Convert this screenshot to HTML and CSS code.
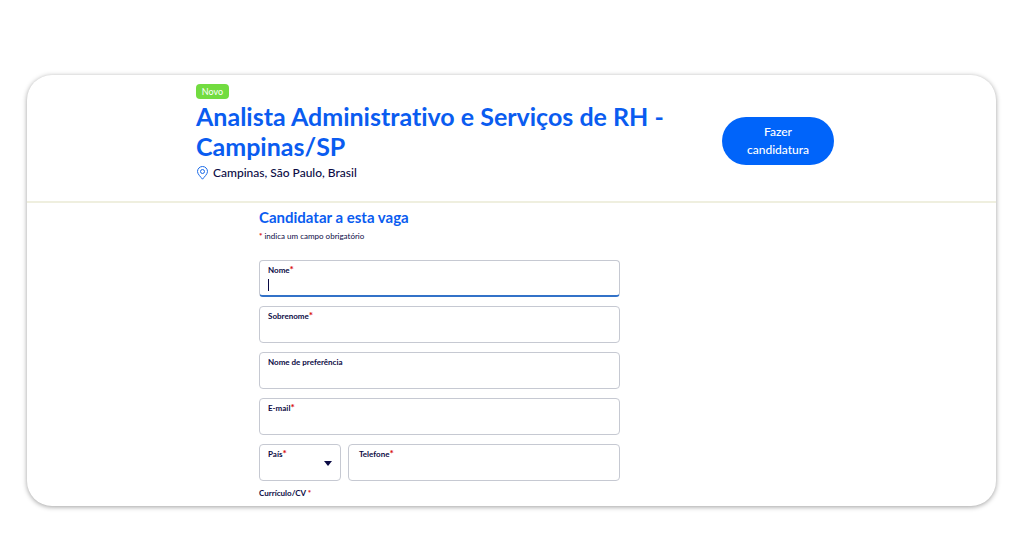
FILE: index.html
```html
<!DOCTYPE html>
<html lang="pt-BR">
<head>
    <meta charset="UTF-8">
    <meta name="viewport" content="width=device-width, initial-scale=1.0">
    <title>Analista Administrativo e Serviços de RH - Campinas/SP</title>
    <link rel="stylesheet" href="styles.css">
</head>
<body>
    <main class="card">
        <header class="job-header">
            <div class="job-info">
                <span class="badge">Novo</span>
                <h1>Analista Administrativo e Serviços de RH - Campinas/SP</h1>
                <p class="location">
                    <svg class="pin" viewBox="0 0 12 14" aria-hidden="true">
                        <path d="M6 13.2C4.6 11.2 1 8.3 1 5.5a5 5 0 0 1 10 0c0 2.8-3.6 5.700-5 7.700z"/>
                        <circle cx="6" cy="5.500" r="2"/>
                    </svg>
                    Campinas, São Paulo, Brasil
                </p>
            </div>
            <button type="button" class="apply-btn">Fazer candidatura</button>
        </header>

        <form class="apply-form">
            <h2>Candidatar a esta vaga</h2>
            <p class="note"><span class="required">*</span> indica um campo obrigatório</p>

            <div class="fields">
                <div class="field active">
                    <label for="nome">Nome<span class="required">*</span></label>
                    <input type="text" id="nome" name="nome" required>
                </div>
                <div class="field">
                    <label for="sobrenome">Sobrenome<span class="required">*</span></label>
                    <input type="text" id="sobrenome" name="sobrenome" required>
                </div>
                <div class="field">
                    <label for="preferencia">Nome de preferência</label>
                    <input type="text" id="preferencia" name="preferencia">
                </div>
                <div class="field">
                    <label for="email">E-mail<span class="required">*</span></label>
                    <input type="email" id="email" name="email" required>
                </div>
                <div class="field-row">
                    <div class="field country">
                        <label for="pais">País<span class="required">*</span></label>
                        <select id="pais" name="pais" required>
                            <option value=""></option>
                        </select>
                        <svg class="arrow" viewBox="0 0 8 5" aria-hidden="true"><path d="M0 0h8L4 5z"/></svg>
                    </div>
                    <div class="field phone">
                        <label for="telefone">Telefone<span class="required">*</span></label>
                        <input type="tel" id="telefone" name="telefone" required>
                    </div>
                </div>
            </div>
            <p class="resume">Currículo/CV <span class="required">*</span></p>
        </form>
    </main>
</body>
</html>
```
FILE: styles.css
```css
* {
    box-sizing: border-box;
}
body {
    margin: 0;
    padding: 75px 28px 30px 27px;
    background: #fff;
    color: #0b0b45;
    font-family: Lato, "Open Sans", sans-serif;
    font-variant-ligatures: none;
}
h1, h2, p {
    margin: 0;
}
.card {
    background: #fff;
    border-radius: 25px;
    box-shadow: 0 1px 5px rgba(0, 0, 0, 0.38);
}
.job-header {
    display: flex;
    align-items: flex-start;
    gap: 24px;
    padding: 9px 162px 16px 169px;
    border-bottom: 2px solid #efefdf;
}
.job-info {
    flex: 1;
}
.badge {
    display: block;
    width: 33px;
    margin-bottom: 2px;
    border-radius: 4px;
    background: #72dc40;
    color: #fff;
    font-size: 9px;
    line-height: 15px;
    text-align: center;
}
h1 {
    color: #0a5cf0;
    font-size: 25px;
    line-height: 30px;
}
.location {
    display: flex;
    align-items: center;
    gap: 4px;
    font-size: 12px;
    font-weight: 500;
    line-height: 24px;
}
.pin {
    width: 13px;
    height: 14px;
    fill: none;
    stroke: #1a6ae8;
    stroke-width: 1;
}
.apply-btn {
    width: 112px;
    margin-top: 33px;
    padding: 6px 16px;
    border: 0;
    border-radius: 24px;
    background: #0064fa;
    color: #fff;
    font-family: inherit;
    font-size: 12px;
    font-weight: 500;
    line-height: 18px;
}
.apply-form {
    max-width: 593px;
    padding: 5px 0 8px 232px;
}
h2 {
    color: #0a5cf0;
    font-size: 15px;
    line-height: 18px;
}
.note {
    margin: 5px 0 19px;
    font-size: 8px;
    line-height: 10px;
}
.required {
    color: #d81414;
    font-weight: 900;
}
.fields {
    display: flex;
    flex-direction: column;
    gap: 9px;
}
.field {
    position: relative;
    height: 37px;
    padding: 3px 8px;
    border: 1px solid #c6c9d2;
    border-radius: 4px;
}
.field label {
    display: block;
    font-size: 8px;
    font-weight: 700;
    line-height: 12px;
}
.field .required {
    font-size: 10px;
    line-height: 10px;
}
.field input,
.field select {
    display: block;
    width: 100%;
    height: 16px;
    padding: 0;
    border: 0;
    outline: 0;
    background: transparent;
    color: inherit;
    font-family: inherit;
    font-size: 11px;
    appearance: none;
}
.field.active {
    border-bottom: 2px solid #3272c8;
}
/* text cursor */
.field.active::after {
    content: "";
    position: absolute;
    left: 8px;
    top: 18px;
    width: 1px;
    height: 12px;
    background: #0b0b45;
}
.field-row {
    display: flex;
    gap: 7px;
}
.field.country {
    flex: 0 0 82px;
}
.field.phone {
    flex: 1;
    padding-left: 10px;
}
.arrow {
    position: absolute;
    right: 8px;
    top: 16px;
    width: 8px;
    height: 5px;
    fill: #0b0b45;
}
.resume {
    margin-top: 7px;
    font-size: 8px;
    font-weight: 700;
    line-height: 10px;
}
```
